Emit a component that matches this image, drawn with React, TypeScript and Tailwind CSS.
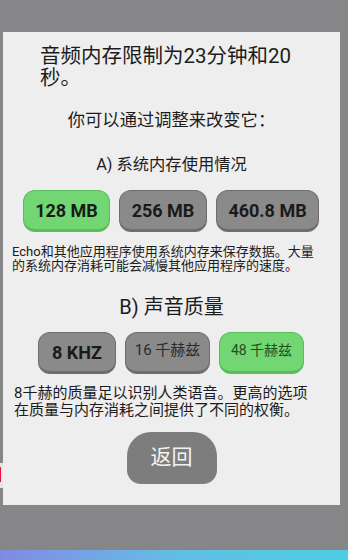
const font = { fontFamily: '"Roboto", "Noto Sans CJK SC", sans-serif' }

function OptionButton({
  label,
  active,
  width,
  className = '',
}: {
  label: string
  active?: boolean
  width: string
  className?: string
}) {
  return (
    <div
      className={`flex h-[42px] items-center justify-center rounded-[12px] border border-b-[3px] ${width} ${
        active ? 'border-[#5cbc5c] bg-[#72d672]' : 'border-[#6e6e6e] bg-[#8a8a8a]'
      } ${className}`}
    >
      {label}
    </div>
  )
}

export default function App() {
  return (
    <div className="relative h-[560px] w-[348px] overflow-hidden bg-[#868688]" style={font}>
      {/* dialog */}
      <div className="ml-[3px] mt-[32px] flex h-[473px] w-[337px] flex-col bg-[#eeeeee] text-[#1c1c1c]">
        <p className="mr-[42px] pl-[37px] pt-[13px] text-[20.5px] leading-[22px]">
          音频内存限制为23分钟和20秒。
        </p>

        <p className="mt-[21px] text-center text-[17.3px] leading-[20px]">你可以通过调整来改变它：</p>

        <p className="mt-[25px] text-center text-[16.3px] leading-[20px]">A) 系统内存使用情况</p>

        <div className="mt-[15px] flex gap-[9px] pl-[20px] text-[18px] font-bold text-[#1a1a1a]">
          <OptionButton label="128 MB" active width="w-[87px]" />
          <OptionButton label="256 MB" width="w-[88px]" />
          <OptionButton label="460.8 MB" width="w-[103px]" />
        </div>

        <p className="mt-[13px] whitespace-nowrap pl-[9px] text-[13px] leading-[13.5px]">
          Echo和其他应用程序使用系统内存来保存数据。大量
          <br />
          的系统内存消耗可能会减慢其他应用程序的速度。
        </p>

        <p className="mt-[23px] text-center text-[20px] leading-[24px]">B) 声音质量</p>

        <div className="mt-[13px] flex gap-[9px] pl-[35px]">
          <OptionButton label="8 KHZ" width="w-[78px]" className="text-[18px] font-bold text-[#1a1a1a]" />
          <OptionButton label="16 千赫兹" width="w-[85px]" className="pb-[4px] text-[15px] text-[#2a2a2a]" />
          <OptionButton label="48 千赫兹" active width="w-[85px]" className="pb-[4px] text-[14px] text-[#1f4f1f]" />
        </div>

        <p className="mt-[11px] pl-[11px] pr-[20px] text-[15px] leading-[17px]">
          8千赫的质量足以识别人类语音。更高的选项在质量与内存消耗之间提供了不同的权衡。
        </p>

        <div className="mx-auto mt-[13px] flex h-[52px] w-[90px] items-center justify-center rounded-t-[24px] rounded-b-[14px] bg-[#7d7d7d] text-[21px] text-[#f2f2f2]">
          返回
        </div>
      </div>

      {/* edge marker */}
      <div className="absolute left-0 top-[463px] h-[25px] w-[3px] bg-[#e6e6e6]" />
      <div className="absolute left-0 top-[467px] h-[15px] w-[1px] bg-[#e8103a]" />

      {/* bottom bar */}
      <div className="absolute bottom-0 left-0 h-[10px] w-full bg-gradient-to-r from-[#7f8ae2] via-[#62bde6] to-[#4ccde2]" />
    </div>
  )
}
